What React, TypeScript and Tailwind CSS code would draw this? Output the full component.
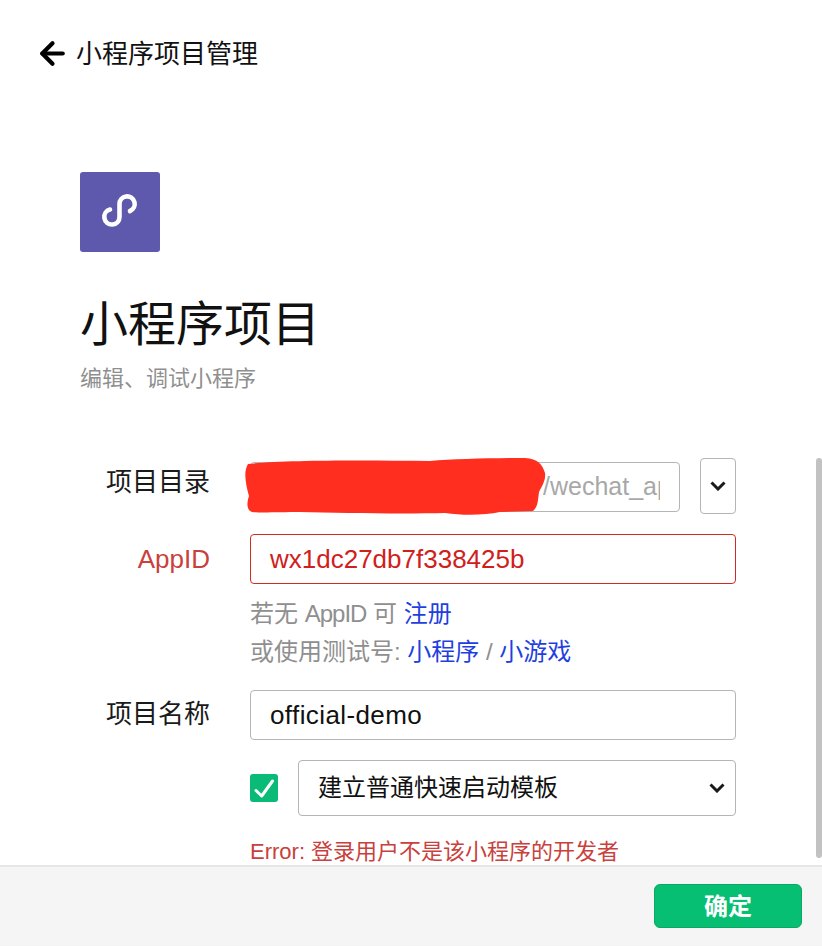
import { ArrowLeft } from 'lucide-react';

const font = "font-['Liberation_Sans','Noto_Sans_CJK_SC',sans-serif]";

const Label = ({ text, error, top }: { text: string; error?: boolean; top: string }) => (
  <div className={`w-[130px] shrink-0 text-right text-[26px] leading-[34px] ${top} ${error ? 'text-[#c9413c]' : 'text-[#1a1a1a]'}`}>
    {text}
  </div>
);

// native select arrow: wide and shallow
const SelectArrow = () => (
  <svg viewBox="0 0 16 10" className="h-[10px] w-[16px]" fill="none" stroke="#1a1a1a" strokeWidth="3">
    <path d="M1.5 1.5 L8 8 L14.5 1.5" />
  </svg>
);

const App = () => {
  return (
    <div className={`relative flex h-[948px] w-[822px] flex-col overflow-hidden bg-white ${font}`}>
      <div className="flex h-[865px] shrink-0 flex-col overflow-hidden">
        <div className="flex shrink-0 items-center gap-[6px] pl-[35px] pt-[36px]">
          <ArrowLeft className="h-[35px] w-[35px] text-black" strokeWidth={2.9} />
          <span className="text-[26px] leading-[34px] text-[#111]">小程序项目管理</span>
        </div>

        <div className="ml-[80px] mt-[101px] h-[80px] w-[80px] shrink-0 rounded-[3px] bg-[#5f59ad]">
          <svg viewBox="0 0 80 80" className="h-[80px] w-[80px]" fill="none" stroke="white" strokeWidth="4.6" strokeLinecap="round">
            <path d="M50 39 A7.6 7.6 0 1 0 39.5 32 V45 A7.6 7.6 0 1 1 30 37.6" />
          </svg>
        </div>

        <h1 className="ml-[80px] mt-[39px] shrink-0 text-[48px] font-normal leading-[68px] text-[#111]">小程序项目</h1>
        <p className="ml-[80px] mt-[5px] shrink-0 text-[22px] leading-[30px] text-[#8f8f8f]">编辑、调试小程序</p>

        <div className="mt-[64px] flex shrink-0 flex-col pl-[80px]">
          <div className="flex items-start">
            <Label text="项目目录" top="mt-[7px]" />
            <div className="ml-[40px] mt-[4px] flex h-[50px] w-[430px] items-center justify-end rounded-[4px] border border-[#b5b5b5] pr-[19px]">
              <span className="w-[117px] overflow-hidden whitespace-nowrap text-[25px] text-[#a8a8a8]">/wechat_app</span>
            </div>
            <div className="ml-[20px] flex h-[56px] w-[36px] items-center justify-center rounded-[4px] border border-[#b5b5b5]">
              <SelectArrow />
            </div>
          </div>

          <div className="mt-[20px] flex items-start">
            <Label text="AppID" error top="mt-[8px]" />
            <div className="ml-[40px] flex h-[50px] w-[486px] items-center rounded-[4px] border border-[#cf2b22] pl-[19px] text-[26px] text-[#d0201c]">
              wx1dc27db7f338425b
            </div>
          </div>

          <div className="ml-[170px] mt-[11px] text-[24px] leading-[38px] text-[#8f8f8f]">
            <div>
              若无 <span className="tracking-[-1px]">AppID</span> 可 <span className="text-[#1f3fe0]">注册</span>
            </div>
            <div>
              或使用测试号: <span className="text-[#1f3fe0]">小程序</span> / <span className="text-[#1f3fe0]">小游戏</span>
            </div>
          </div>

          <div className="mt-[19px] flex items-start">
            <Label text="项目名称" top="mt-[7px]" />
            <div className="ml-[40px] flex h-[50px] w-[486px] items-center rounded-[4px] border border-[#b5b5b5] pl-[19px] text-[26px] tracking-[0.4px] text-[#111]">
              official-demo
            </div>
          </div>

          <div className="ml-[170px] mt-[20px] flex items-center gap-[20px]">
            <div className="flex h-[28px] w-[28px] items-center justify-center rounded-[3px] bg-[#09bb76]">
              <svg viewBox="0 0 28 28" className="h-[28px] w-[28px]" fill="none" stroke="white" strokeWidth="3" strokeLinecap="round" strokeLinejoin="round">
                <path d="M6 16.5 L11.7 22 L22.5 7" />
              </svg>
            </div>
            <div className="flex h-[56px] w-[438px] items-center justify-between rounded-[4px] border border-[#b5b5b5] pl-[19px] pr-[10px]">
              <span className="text-[24px] text-[#111]">建立普通快速启动模板</span>
              <SelectArrow />
            </div>
          </div>

          <div className="ml-[170px] mt-[17px] text-[22px] leading-[38px] text-[#c9413c]">Error: 登录用户不是该小程序的开发者</div>
        </div>
      </div>

      <div className="flex h-[81px] shrink-0 items-start justify-end border-t-2 border-[#e6e6e6] bg-[#f5f5f5] pr-[20px] pt-[17px]">
        <button className="h-[44px] w-[148px] rounded-[6px] border border-[#08a964] bg-[#06bf72] pt-[2px] text-[24px] font-bold text-white">确定</button>
      </div>

      {/* scrollbar */}
      <div className="absolute left-[816px] top-[458px] h-[400px] w-[6px] rounded-[3px] bg-[#c2c2c2]" />

      {/* red marker over the path */}
      <svg className="absolute left-[240px] top-[450px]" width="320" height="70" viewBox="0 0 320 70">
        <path
          d="M8 14 C40 10 120 10 190 11 C215 9 250 8 285 8 C298 9 302 14 305 23 C306 30 302 36 299 42 C298 50 298 57 293 61 L260 62 C245 65 225 66 205 63 C160 64 100 63 60 62 C40 62 20 63 12 62 C6 60 7 52 9 46 C6 35 3 22 8 14 Z"
          fill="#ff2e1f"
        />
      </svg>
    </div>
  );
};

export default App;
